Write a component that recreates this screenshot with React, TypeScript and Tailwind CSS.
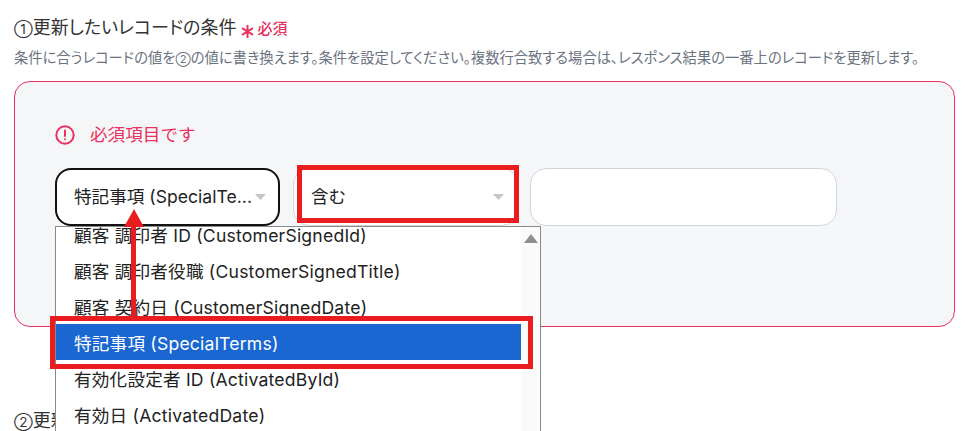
const fontStack = "font-['Inter','Noto_Sans_CJK_JP',sans-serif]";

const options = [
  "顧客 調印者 ID (CustomerSignedId)",
  "顧客 調印者役職 (CustomerSignedTitle)",
  "顧客 契約日 (CustomerSignedDate)",
  "特記事項 (SpecialTerms)",
  "有効化設定者 ID (ActivatedById)",
  "有効日 (ActivatedDate)",
];

const Caret = ({ className = "" }: { className?: string }) => (
  <svg width="11" height="6" viewBox="0 0 11 6" className={className}>
    <path d="M0 0h11L5.5 6z" fill="#c4c6ca" />
  </svg>
);

const App = () => {
  return (
    <div className={`relative w-[970px] h-[431px] overflow-hidden bg-white ${fontStack}`}>
      <div className="pl-[14px] pr-[15px] pt-[16px]">
        <div className="flex items-center h-[24px]">
          <h2 className="text-[18px] leading-[24px] text-[#333] [font-feature-settings:'palt']">
            <span className="text-[13.5px]">①</span>更新したいレコードの条件
          </h2>
          <svg width="13" height="13" viewBox="0 0 13 13" className="ml-[5px] mt-[6px]" stroke="#e8315f" strokeWidth="2">
            <path d="M6.5 0v13M1 3.2l11 6.6M12 3.2L1 9.8" />
          </svg>
          <span className="ml-[3px] mt-[1px] text-[15px] font-medium leading-[24px] text-[#e8315f]">必須</span>
        </div>
        <p className="mt-[9px] text-[14.3px] leading-[18px] text-[#6b7280] whitespace-nowrap [font-feature-settings:'palt']">
          条件に合うレコードの値を<span className="text-[11px]">②</span>の値に書き換えます。条件を設定してください。複数行合致する場合は、レスポンス結果の一番上のレコードを更新します。
        </p>

        <div className="mt-[13px] h-[246px] rounded-[16px] border border-[#e8315f] bg-[#f5f6f8] pl-[40px] pt-[39px]">
          <div className="flex items-center h-[28px]">
            <svg width="20" height="20" viewBox="0 0 20 20" fill="none" stroke="#e8315f" strokeWidth="2" strokeLinecap="round">
              <circle cx="10" cy="10" r="8.7" />
              <path d="M10 5.6v5.4M10 14.2v.1" />
            </svg>
            <span className="ml-[15px] text-[17.6px] leading-[20px] text-[#e8315f]">必須項目です</span>
          </div>

          <div className="mt-[19px] flex">
            <div className="flex items-center justify-between w-[225px] h-[58px] rounded-[16px] border-2 border-[#111] bg-white pl-[17px] pr-[12px]">
              <span className="text-[17.6px] text-[#222] whitespace-nowrap">特記事項 (SpecialTe...</span>
              <Caret />
            </div>
            <div className="ml-[13px] flex items-center justify-between w-[225px] h-[58px] rounded-[16px] border border-[#d1d5db] bg-white pl-[17px] pr-[13px]">
              <span className="text-[17.6px] text-[#222]">含む</span>
              <Caret />
            </div>
            <div className="ml-[12px] w-[307px] h-[58px] rounded-[16px] border border-[#d1d5db] bg-white" />
          </div>
        </div>

        <h2 className="mt-[82px] text-[18px] leading-[24px] text-[#333] whitespace-nowrap [font-feature-settings:'palt']">
          <span className="text-[13.5px]">②</span>更新後のレコードの値
        </h2>
      </div>

      {/* open select list, scrolled part way */}
      <div className="absolute left-[55px] top-[226px] w-[486px] h-[215px] border border-[#8a8a8a] bg-white flex overflow-hidden">
        <ul className="w-[465px] -mt-[11px]">
          {options.map((label, i) => (
            <li
              key={label}
              className={`h-[36px] pl-[18px] text-[17.6px] leading-[39px] tracking-[0.2px] whitespace-nowrap ${
                i === 3 ? "bg-[#1a67d2] text-white" : "text-[#222]"
              }`}
            >
              {label}
            </li>
          ))}
        </ul>
        <div className="flex-1 bg-[#fafafa] flex justify-center pt-[7px]">
          <svg width="14" height="9" viewBox="0 0 14 9">
            <path d="M7 0l7 9H0z" fill="#8f8f8f" />
          </svg>
        </div>
      </div>

      {/* red annotations */}
      <div className="absolute left-[297px] top-[165px] w-[222px] h-[58px] border-[5px] border-[#e91c1f]" />
      <div className="absolute left-[50px] top-[316px] w-[483px] h-[53px] border-[5px] border-[#e91c1f]" />
      <div className="absolute left-[131px] top-[224px] w-[5px] h-[92px] bg-[#e91c1f]" />
      <svg width="20" height="18" viewBox="0 0 20 18" className="absolute left-[123.5px] top-[209px]">
        <path d="M10 0l10 18H0z" fill="#e91c1f" />
      </svg>
    </div>
  );
};

export default App;
